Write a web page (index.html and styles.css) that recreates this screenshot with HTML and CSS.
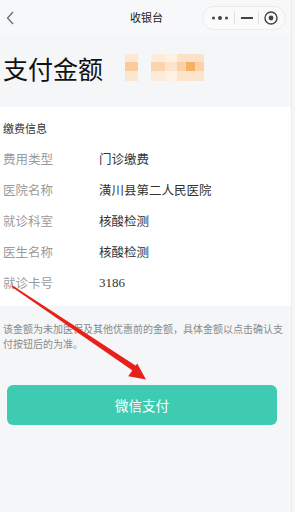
FILE: index.html
```html
<!DOCTYPE html>
<html lang="zh-CN">
<head>
<meta charset="utf-8">
<title>收银台</title>
<link rel="stylesheet" href="styles.css">
</head>
<body>
<div class="page">
  <header class="nav">
    <svg class="back" width="8" height="14" viewBox="0 0 8 14"><path d="M7 1 L1.5 7 L7 13" fill="none" stroke="#666" stroke-width="1.2"/></svg>
    <div class="nav-title">收银台</div>
    <div class="capsule">
      <svg class="cap-more" width="18" height="6" viewBox="0 0 18 6"><circle cx="2.5" cy="3" r="1.5" fill="#444"/><circle cx="9" cy="3" r="2" fill="#444"/><circle cx="15.5" cy="3" r="1.5" fill="#444"/></svg>
      <span class="cap-div"></span>
      <svg class="cap-min" width="12" height="4" viewBox="0 0 12 4"><rect x="0" y="1" width="12" height="2" fill="#444"/></svg>
      <span class="cap-div"></span>
      <svg class="cap-close" width="14" height="14" viewBox="0 0 14 14"><circle cx="7" cy="7" r="6" fill="none" stroke="#444" stroke-width="1.4"/><circle cx="7" cy="7" r="2.4" fill="#444"/></svg>
    </div>
  </header>

  <section class="amount">
    <span class="amount-label">支付金额</span>
    <svg class="mosaic" width="82" height="27" viewBox="0 0 82 27">
      <rect x="0" y="0" width="13" height="8" fill="#fde8d4"/>
      <rect x="0" y="8" width="13" height="9" fill="#fbcb9b"/>
      <rect x="0" y="17" width="13" height="10" fill="#fde6d0"/>
      <rect x="26" y="0" width="14" height="8" fill="#fdecdc"/>
      <rect x="40" y="0" width="12" height="8" fill="#fef1e4"/>
      <rect x="52" y="0" width="27" height="8" fill="#fce2c7"/>
      <rect x="26" y="8" width="14" height="9" fill="#fbd4ae"/>
      <rect x="40" y="8" width="12" height="9" fill="#fde3ca"/>
      <rect x="52" y="8" width="9" height="9" fill="#fbd0a5"/>
      <rect x="61" y="8" width="9" height="9" fill="#f7b064"/>
      <rect x="70" y="8" width="9" height="9" fill="#fbd2a8"/>
      <rect x="26" y="17" width="14" height="10" fill="#fdeada"/>
      <rect x="40" y="17" width="12" height="10" fill="#fef0e3"/>
      <rect x="52" y="17" width="27" height="10" fill="#fde4cd"/>
    </svg>
  </section>

  <section class="card">
    <div class="card-head">缴费信息</div>
    <div class="row"><span class="label">费用类型</span><span class="value">门诊缴费</span></div>
    <div class="row"><span class="label">医院名称</span><span class="value">潢川县第二人民医院</span></div>
    <div class="row"><span class="label">就诊科室</span><span class="value">核酸检测</span></div>
    <div class="row"><span class="label">医生名称</span><span class="value">核酸检测</span></div>
    <div class="row"><span class="label">就诊卡号</span><span class="value num">3186</span></div>
  </section>

  <p class="note">该金额为未加医保及其他优惠前的金额，具体金额以点击确认支付按钮后的为准。</p>

  <button class="pay">微信支付</button>
</div>

<svg class="arrow" width="295" height="512" viewBox="0 0 295 512">
  <polygon points="11.5,286.8 12.6,285.6 138.5,367.6 135.4,372.6" fill="#e8201a"/>
  <polygon points="146,379.5 128.2,376.2 137.2,363.6" fill="#e8201a"/>
</svg>
</body>
</html>
```

FILE: styles.css
```css
* { box-sizing: border-box; }
html, body { margin: 0; padding: 0; }
body {
  width: 295px;
  height: 512px;
  overflow: hidden;
  background: #f5f6f8;
  font-family: "Noto Sans CJK SC", "Noto Sans", sans-serif;
  color: #333;
  position: relative;
}
.page {
  width: 292px;
  min-height: 512px;
  display: flex;
  flex-direction: column;
  border-right: 1px solid #ececec;
}
.nav {
  height: 34px;
  display: flex;
  align-items: center;
  padding: 0 0 0 6px;
  background: #f7f8fa;
  position: relative;
}
.back { display: block; margin-top: 2px; }
.nav-title {
  position: absolute;
  left: 0;
  right: 0;
  top: 11px;
  text-align: center;
  font-size: 11px;
  line-height: 12px;
  color: #222;
  padding-left: 2px;
}
.capsule {
  margin-left: auto;
  margin-right: 5px;
  width: 84px;
  height: 24px;
  margin-top: 1px;
  border: 1px solid #ebebeb;
  border-radius: 12px;
  background: #fafafa;
  display: flex;
  align-items: center;
  justify-content: space-between;
  padding: 0 7px 0 8px;
  position: relative;
  z-index: 1;
}
.cap-div { width: 1px; height: 14px; background: #e2e2e2; }
.cap-more, .cap-min, .cap-close { display: block; }
.amount {
  height: 73px;
  display: flex;
  align-items: center;
  padding: 0 3px;
  gap: 22px;
}
.amount-label {
  font-size: 25px;
  line-height: 25px;
  color: #111;
  margin-top: -5px;
}
.mosaic { display: block; margin-top: -6px; }
.card {
  background: #fff;
  padding: 0 3px 8px;
}
.card-head {
  font-size: 11px;
  line-height: 14px;
  padding: 14px 0 8px;
  color: #333;
}
.row {
  height: 31px;
  display: flex;
  align-items: center;
  font-size: 12.5px;
}
.label { width: 96px; color: #9a9a9a; }
.value { color: #333; }
.num { font-family: "Liberation Serif", serif; font-size: 13px; }
.note {
  margin: 0;
  padding: 15px 3px 0;
  font-size: 10px;
  line-height: 15px;
  color: #8a8a8a;
}
.pay {
  margin: 34px 0 0 7px;
  width: 270px;
  height: 40px;
  border: 0;
  border-radius: 6px;
  background: #3ecbb1;
  color: #fff;
  font-family: "Noto Sans CJK SC", sans-serif;
  font-size: 13.5px;
  padding: 0;
}
.arrow {
  position: absolute;
  left: 0;
  top: 0;
  pointer-events: none;
}
```
